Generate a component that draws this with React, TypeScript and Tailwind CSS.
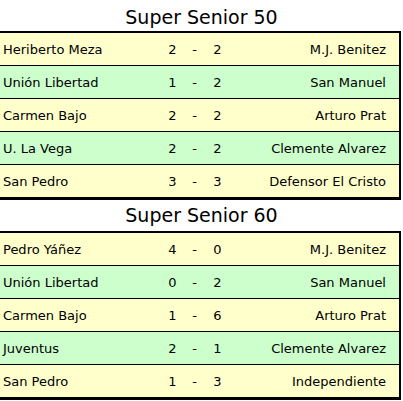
import React from "react";

type Match = [string, number, number, string];

const s50: Match[] = [
  ["Heriberto Meza", 2, 2, "M.J. Benitez"],
  ["Unión Libertad", 1, 2, "San Manuel"],
  ["Carmen Bajo", 2, 2, "Arturo Prat"],
  ["U. La Vega", 2, 2, "Clemente Alvarez"],
  ["San Pedro", 3, 3, "Defensor El Cristo"],
];

const s60: Match[] = [
  ["Pedro Yáñez", 4, 0, "M.J. Benitez"],
  ["Unión Libertad", 0, 2, "San Manuel"],
  ["Carmen Bajo", 1, 6, "Arturo Prat"],
  ["Juventus", 2, 1, "Clemente Alvarez"],
  ["San Pedro", 1, 3, "Independiente"],
];

function Section({ title, rows, titleClass }: { title: string; rows: Match[]; titleClass: string }) {
  return (
    <div>
      <div className={`flex items-center justify-center text-[19px] text-black ${titleClass}`}>
        {title}
      </div>
      <div className="border-t-[2px] border-b-[3px] border-r-[2px] border-black w-[401px]">
        {rows.map((r, i) => (
          <div
            key={i}
            className={`grid grid-cols-[160px_25px_19px_27px_1fr] items-center text-[13px] text-black ${
              i > 0 ? "border-t border-black h-[33px]" : "h-[32px]"
            } ${i % 2 === 0 ? "bg-[#ffffcc]" : "bg-[#ccffcc]"}`}
          >
            <div className="pl-[3px] pt-[2px]">{r[0]}</div>
            <div className="text-center pt-[2px]">{r[1]}</div>
            <div className="text-center pt-[2px]">-</div>
            <div className="text-center pt-[2px]">{r[2]}</div>
            <div className="text-right pr-[13px] pt-[2px]">{r[3]}</div>
          </div>
        ))}
      </div>
    </div>
  );
}

export default function App() {
  return (
    <div
      className="w-[403px] h-[401px] bg-white overflow-hidden"
      style={{ fontFamily: '"DejaVu Sans", Verdana, sans-serif' }}
    >
      <Section title="Super Senior 50" rows={s50} titleClass="h-[31px] pt-[3px]" />
      <Section title="Super Senior 60" rows={s60} titleClass="h-[31px]" />
    </div>
  );
}
